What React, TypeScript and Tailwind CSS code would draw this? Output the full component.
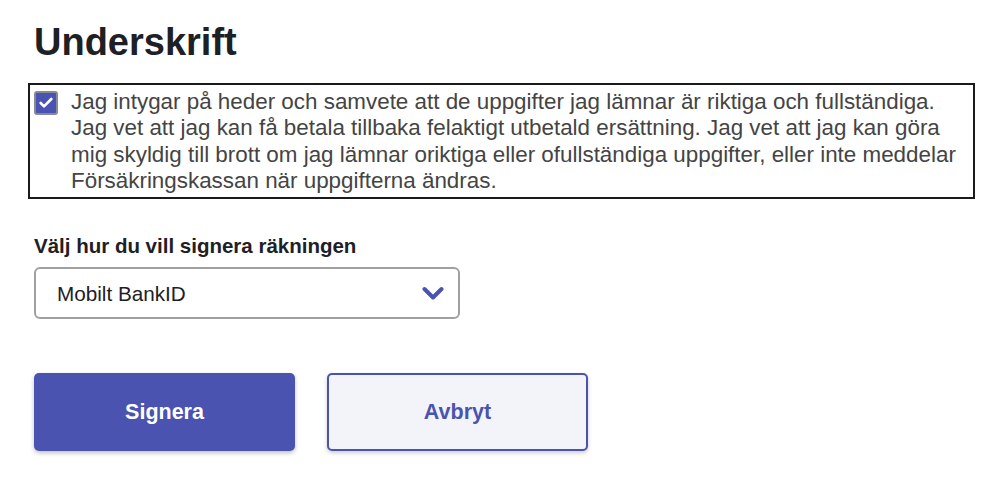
import { Check } from "lucide-react";

export default function App() {
  return (
    <div
      className="min-h-[490px] bg-white px-[34px] pt-[20px] text-[#222]"
      style={{ fontFamily: '"Liberation Sans", Arial, sans-serif' }}
    >
      {/* Heading */}
      <h1 className="text-[38px] font-bold leading-[44px] text-[#1d2024]">
        Underskrift
      </h1>

      {/* Confirmation box */}
      <div className="-ml-[6px] mt-[19px] w-[947px] border-2 border-[#1a1a1a] pb-[3px] pl-[4px] pt-[4px]">
        <label className="flex items-start gap-[13px]">
          <span className="mt-[2px] flex h-[24px] w-[24px] shrink-0 items-center justify-center rounded-[3px] border-2 border-[#8a8a95] bg-[#4a52b2]">
            <Check className="h-[16px] w-[16px] text-white" strokeWidth={4} />
          </span>
          <span className="whitespace-nowrap text-[22.4px] leading-[26.3px] text-[#444]">
            Jag intygar på heder och samvete att de uppgifter jag lämnar är riktiga och fullständiga.
            <br />
            Jag vet att jag kan få betala tillbaka felaktigt utbetald ersättning. Jag vet att jag kan göra
            <br />
            mig skyldig till brott om jag lämnar oriktiga eller ofullständiga uppgifter, eller inte meddelar
            <br />
            Försäkringskassan när uppgifterna ändras.
          </span>
        </label>
      </div>

      {/* Sign method */}
      <div className="mt-[35px] text-[20.5px] font-bold leading-[24px] text-[#1d2024]">
        Välj hur du vill signera räkningen
      </div>
      <div className="mt-[9px] flex h-[52px] w-[426px] items-center justify-between rounded-[6px] border-2 border-[#a0a0a0] pl-[21px] pr-[14px]">
        <span className="text-[20.7px] text-[#1d2024]">Mobilt BankID</span>
        <svg width="22" height="15" viewBox="0 0 22 15" fill="none">
          <polyline
            points="2.5,3 11,11.5 19.5,3"
            stroke="#4a52b2"
            strokeWidth="4"
            strokeLinecap="round"
            strokeLinejoin="round"
          />
        </svg>
      </div>

      {/* Buttons */}
      <div className="mt-[54px] flex gap-[32px]">
        <button className="h-[78px] w-[261px] rounded-[5px] bg-[#4a53b0] text-[21.5px] font-bold text-white shadow-[0_2px_4px_rgba(0,0,0,0.25)]">
          Signera
        </button>
        <button className="h-[78px] w-[261px] rounded-[5px] border-2 border-[#4a53b0] bg-[#f3f4f9] text-[21.5px] font-bold text-[#4a53b0] shadow-[0_2px_4px_rgba(0,0,0,0.2)]">
          Avbryt
        </button>
      </div>
    </div>
  );
}
